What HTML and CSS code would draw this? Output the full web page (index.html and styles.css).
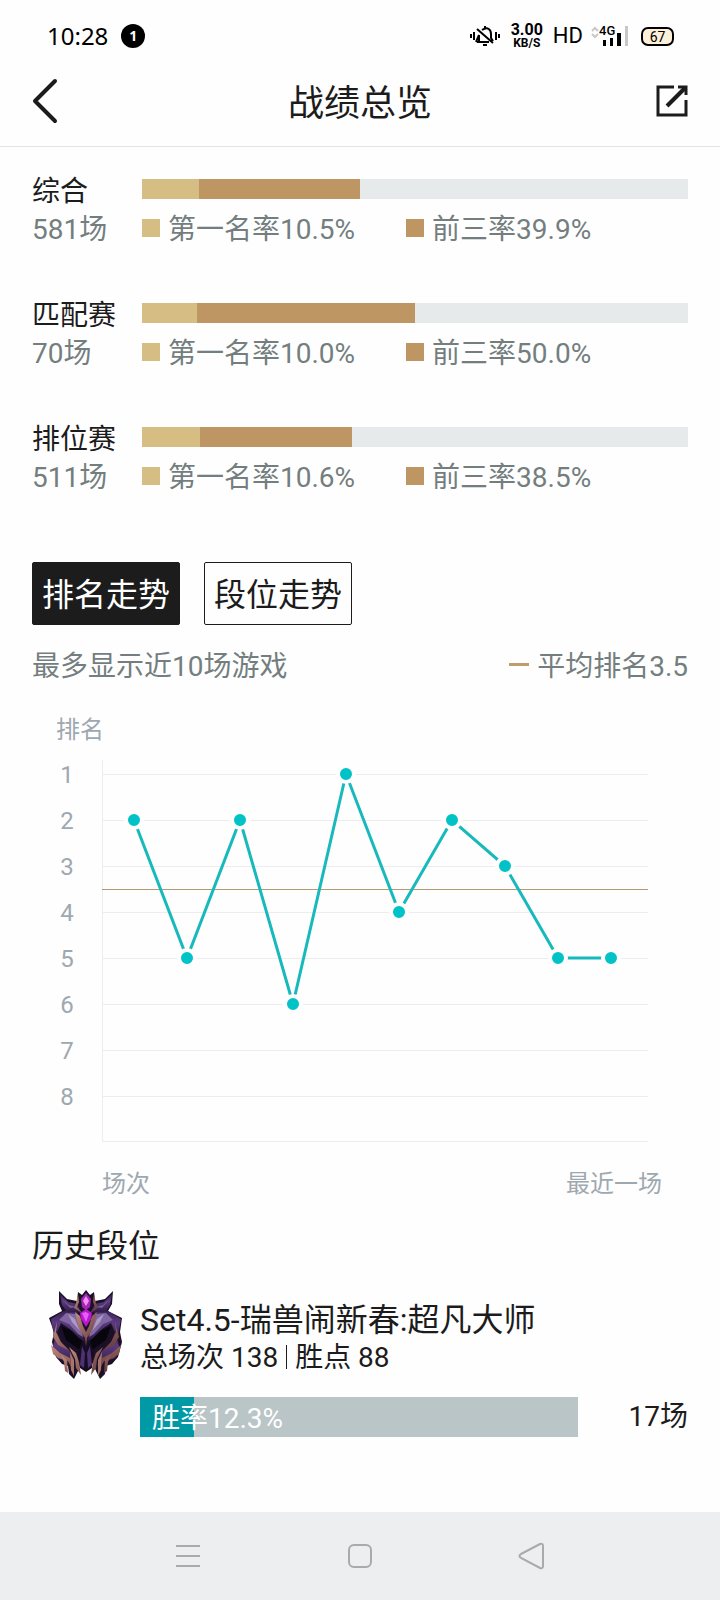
FILE: index.html
```html
<!DOCTYPE html>
<html lang="zh-CN">
<head>
    <meta charset="UTF-8">
    <meta name="viewport" content="width=device-width, initial-scale=1.0">
    <title>战绩总览</title>
    <link rel="stylesheet" href="styles.css">
</head>
<body>
    <div class="status-bar">
        <span class="time">10:28</span>
        <span class="badge">1</span>
        <div class="status-icons">
            <svg class="mute" width="32" height="22" viewBox="0 0 32 22" fill="none" stroke="#000" stroke-width="2">
                <path d="M2 9v4M5 7v8M27 7v8M30 9v4" stroke-width="2"/>
                <path d="M8 17h12M10 16V10M13 5c6-4 9 0 9 4v4l2 3M8 4l16 14M10 10l-3 7"/>
                <path d="M16 1v2M14 20h4"/>
            </svg>
            <div class="speed"><b>3.00</b><small>KB/S</small></div>
            <span class="hd">HD</span>
            <div class="signal">
                <svg width="38" height="22" viewBox="0 0 38 22">
                    <path d="M1 6l3-3 3 3M1 9l3 3 3-3" fill="none" stroke="#c8c8c8" stroke-width="2"/>
                    <path d="M12 15h3v6h-3zM19 13h3v8h-3zM26 8h4v13h-4z" fill="#000"/>
                    <path d="M34 1h3v20h-3z" fill="#c8c8c8"/>
                </svg>
                <span class="net">4G</span>
            </div>
            <span class="battery">67</span>
        </div>
    </div>

    <header class="nav">
        <button class="icon-btn" aria-label="返回">
            <svg width="26" height="46" viewBox="0 0 26 46" fill="none" stroke="#1c1c1c" stroke-width="4" stroke-linecap="round" stroke-linejoin="round">
                <path d="M23 3L3 23l20 20"/>
            </svg>
        </button>
        <h1>战绩总览</h1>
        <button class="icon-btn" aria-label="分享">
            <svg width="32" height="32" viewBox="0 0 32 32" fill="none" stroke="#1c1c1c" stroke-width="3">
                <path d="M18 2H2v28h28V15"/>
                <path d="M11 21L29 3" stroke-width="4"/>
                <path d="M22 2h8v8"/>
            </svg>
        </button>
    </header>

    <main>
        <section class="rates">
            <div class="rate">
                <div class="rate-name">综合</div>
                <div class="bar"><i class="first" style="width: 10.5%"></i><i class="top3" style="width: 29.4%"></i></div>
                <div class="rate-count">581场</div>
                <div class="legend"><span class="key first"></span><span>第一名率10.5%</span><span class="key top3"></span><span>前三率39.9%</span></div>
            </div>
            <div class="rate">
                <div class="rate-name">匹配赛</div>
                <div class="bar"><i class="first" style="width: 10%"></i><i class="top3" style="width: 40%"></i></div>
                <div class="rate-count">70场</div>
                <div class="legend"><span class="key first"></span><span>第一名率10.0%</span><span class="key top3"></span><span>前三率50.0%</span></div>
            </div>
            <div class="rate">
                <div class="rate-name">排位赛</div>
                <div class="bar"><i class="first" style="width: 10.6%"></i><i class="top3" style="width: 27.9%"></i></div>
                <div class="rate-count">511场</div>
                <div class="legend"><span class="key first"></span><span>第一名率10.6%</span><span class="key top3"></span><span>前三率38.5%</span></div>
            </div>
        </section>

        <div class="tabs">
            <button class="tab active">排名走势</button>
            <button class="tab">段位走势</button>
        </div>
        <div class="hint">
            <span>最多显示近10场游戏</span>
            <span class="average">平均排名3.5</span>
        </div>

        <svg class="chart" viewBox="0 0 656 488">
            <text x="24" y="28">排名</text>
            <g text-anchor="middle">
                <text x="35" y="73">1</text>
                <text x="35" y="119">2</text>
                <text x="35" y="165">3</text>
                <text x="35" y="211">4</text>
                <text x="35" y="257">5</text>
                <text x="35" y="303">6</text>
                <text x="35" y="349">7</text>
                <text x="35" y="395">8</text>
            </g>
            <path class="grid" d="M70 50V431M70 64H616M70 110H616M70 156H616M70 202H616M70 248H616M70 294H616M70 340H616M70 386H616M70 431H616"/>
            <path class="mean" d="M70 179H616"/>
            <polyline class="trend" points="102,110 155,248 208,110 261,294 314,64 367,202 420,110 473,156 526,248 579,248"/>
            <g class="dots">
                <circle cx="102" cy="110" r="8"/>
                <circle cx="155" cy="248" r="8"/>
                <circle cx="208" cy="110" r="8"/>
                <circle cx="261" cy="294" r="8"/>
                <circle cx="314" cy="64" r="8"/>
                <circle cx="367" cy="202" r="8"/>
                <circle cx="420" cy="110" r="8"/>
                <circle cx="473" cy="156" r="8"/>
                <circle cx="526" cy="248" r="8"/>
                <circle cx="579" cy="248" r="8"/>
            </g>
            <text x="70" y="482">场次</text>
            <text x="630" y="482" text-anchor="end">最近一场</text>
        </svg>

        <section class="history">
            <h2>历史段位</h2>
            <div class="season">
                <svg class="emblem" width="76" height="92" viewBox="0 0 76 92">
                    <defs>
                        <linearGradient id="plate" x1="0" y1="0" x2="0" y2="1">
                            <stop offset="0" stop-color="#3a2356"/>
                            <stop offset=".4" stop-color="#5b3b80"/>
                            <stop offset="1" stop-color="#2b1942"/>
                        </linearGradient>
                        <linearGradient id="copper" x1="0" y1="0" x2="1" y2="1">
                            <stop offset="0" stop-color="#c48d7c"/>
                            <stop offset="1" stop-color="#5c3438"/>
                        </linearGradient>
                    </defs>
                    <!-- helmet outline -->
                    <path d="M11 2l8 8 10 2 1-9 4 3 4-5 4 5 4-3 1 9 10-2 8-8-1 13-4 7 14 7-2 14 2 10-4 15-6 7-6 2-1 8-5 5-4-8-3-8-6 3-6-3-3 8-4 8-5-5-1-8-6-2-6-7-4-15 2-10L1 29l13-7-3-7z" fill="#1c1029"/>
                    <!-- horns and brow -->
                    <path d="M12 5l8 8 9 2 5 9-16-2-4-6zM64 5l-8 8-9 2-5 9 16-2 4-6z" fill="url(#plate)"/>
                    <path d="M14 10l7 6 8 2-7 1zM62 10l-7 6-8 2 7 1z" fill="#755c94"/>
                    <!-- face plates -->
                    <path d="M3 30l13-8 13 1 5 15 3 14-7-3-8-9-9-6-3 7-4 6zM73 30l-13-8-13 1-5 15-3 14 7-3 8-9 9-6 3 7 4 6z" fill="url(#plate)"/>
                    <path d="M18 24l10 1 5 14 2 9-5-3-9-10-10-4zM58 24l-10 1-5 14-2 9 5-3 9-10 10-4z" fill="#8067a2"/>
                    <path d="M20 25l7 5 5 12-8-9zM56 25l-7 5-5 12 8-9z" fill="#ad99c5"/>
                    <!-- eyes -->
                    <path d="M13 37l11 5 10 10 1 12-6-5-11-8zM63 37l-11 5-10 10-1 12 6-5 11-8z" fill="#08060d"/>
                    <!-- lower mask -->
                    <path d="M9 43l4 12 10 8 4 14-8-4-10-4-4-12zM67 43l-4 12-10 8-4 14 8-4 10-4 4-12z" fill="url(#plate)"/>
                    <path d="M34 52l4 6 4-6 4 12-2 15-6 4-6-4-2-15z" fill="#160d22"/>
                    <path d="M34 57l3 7-1 15-4-3zM42 57l-3 7 1 15 4-3z" fill="#4d3172"/>
                    <!-- copper trim -->
                    <path d="M27 23l5 4 3 10 3 6 3-6 3-10 5-4-4 16-6 10-1 8-1-8-6-10z" fill="url(#copper)"/>
                    <path d="M30 5l1 8-2 5 5 6-8-5 2-5zM46 5l-1 8 2 5-5 6 8-5-2-5z" fill="url(#copper)"/>
                    <path d="M9 33l-1 10 5 10 9 9-12-6-5-8zM67 33l1 10-5 10-9 9 12-6 5-8z" fill="url(#copper)"/>
                    <path d="M3 56l9 8 10 5 1 9-3-6-10-3-5-4zM73 56l-9 8-10 5-1 9 3-6 10-3 5-4z" fill="url(#copper)"/>
                    <path d="M21 58l7 6 3 9 2 13-5-7-1-9zM55 58l-7 6-3 9-2 13 5-7 1-9z" fill="url(#copper)"/>
                    <path d="M13 66l6 5 1 13-3-2-1-9zM63 66l-6 5-1 13 3-2 1-9z" fill="url(#copper)"/>
                    <path d="M22 63l4 8v16l-3-6zM54 63l-4 8v16l3-6z" fill="#a87567"/>
                    <!-- gems -->
                    <path d="M38 4l5 6-1 8-4 3-4-3-1-8z" fill="#a426b5"/>
                    <path d="M38 7l3 5-3 5-3-5z" fill="#f58cf5"/>
                    <path d="M32 24l6-4 6 4-1 6-5 8-5-8z" fill="#b818d0"/>
                    <path d="M34 24l4-1 3 2-3 8z" fill="#e95cf7"/>
                </svg>
                <div class="season-info">
                    <div class="season-name">Set4.5-瑞兽闹新春:超凡大师</div>
                    <div class="season-stats"><span>总场次 138</span><span>胜点 88</span></div>
                    <div class="win-row">
                        <div class="win-bar"><i style="width: 12.3%"></i><span>胜率12.3%</span></div>
                        <span>17场</span>
                    </div>
                </div>
            </div>
        </section>
    </main>

    <nav class="system-nav">
        <button aria-label="菜单">
            <svg width="28" height="28" viewBox="0 0 28 28"><path d="M2 4h24M2 14h24M2 24h24"/></svg>
        </button>
        <button aria-label="主页">
            <svg width="28" height="28" viewBox="0 0 28 28"><rect x="3" y="3" width="22" height="22" rx="5"/></svg>
        </button>
        <button aria-label="后退">
            <svg width="28" height="28" viewBox="0 0 28 28"><path d="M3 12L22 2q3-1 3 2v20q0 3-3 2L3 16q-3-2 0-4z"/></svg>
        </button>
    </nav>
</body>
</html>
```

FILE: styles.css
```css
* {
    box-sizing: border-box;
}
body {
    margin: 0;
    min-height: 100vh;
    display: flex;
    flex-direction: column;
    background: #fefefe;
    color: #1c1c1c;
    font-family: Roboto, "Noto Sans CJK SC", sans-serif;
    font-size: 28px;
    line-height: 38px;
}
button {
    border: none;
    padding: 0;
    background: none;
    font: inherit;
    color: inherit;
}
svg {
    display: block;
}

/* phone status bar */
.status-bar {
    height: 72px;
    padding: 0 46px 0 47px;
    display: flex;
    align-items: center;
    color: #000;
}
.time {
    font-family: "Noto Sans", sans-serif;
    font-size: 24px;
}
.badge {
    width: 24px;
    height: 24px;
    margin-left: 13px;
    border-radius: 50%;
    background: #000;
    color: #fff;
    font: bold 14px/24px "Noto Sans", sans-serif;
    text-align: center;
}
.status-icons {
    margin-left: auto;
    display: flex;
    align-items: center;
}
.speed {
    margin: 0 10px;
    text-align: center;
}
.speed b, .speed small {
    display: block;
    font-size: 16px;
    line-height: 14px;
    font-weight: 700;
}
.speed small {
    font-size: 12px;
    line-height: 12px;
}
.hd {
    font-size: 22px;
}
.signal {
    position: relative;
    margin: 0 12px 0 8px;
}
.net {
    position: absolute;
    left: 8px;
    top: 0;
    font-size: 13px;
    line-height: 12px;
    font-weight: 500;
}
.battery {
    width: 33px;
    height: 19px;
    border: 2px solid #000;
    border-radius: 7px;
    background: #fdf0d8;
    font-size: 14px;
    line-height: 16px;
    text-align: center;
}

.nav {
    height: 75px;
    padding: 0 32px 16px;
    display: flex;
    align-items: center;
    justify-content: space-between;
    border-bottom: 1px solid #e2e4e4;
}
.icon-btn {
    width: 32px;
}
h1 {
    margin: 0;
    padding-top: 6px;
    font-size: 36px;
    font-weight: 400;
}

main {
    flex: 1;
    padding: 26px 32px;
}
.rate {
    display: grid;
    grid-template-columns: 110px 1fr;
    align-items: center;
    margin-bottom: 48px;
}
.bar {
    height: 20px;
    margin-bottom: 6px;
    display: flex;
    background: #e6eaea;
}
.first {
    background: #d6bd84;
}
.top3 {
    background: #be9664;
}
.rate-count, .legend {
    color: #747e7e;
}
.legend {
    display: flex;
    align-items: center;
}
.key {
    width: 18px;
    height: 18px;
    margin-right: 8px;
    margin-bottom: 5px;
}
.key.top3 {
    margin-left: 51px;
}

.tabs {
    display: flex;
    gap: 24px;
    margin-top: 65px;
}
.tab {
    padding: 4px 9px 0;
    border: 1px solid #1c1c1c;
    border-radius: 2px;
    font-size: 32px;
    line-height: 57px;
}
.tab.active {
    background: #1c1c1c;
    color: #fff;
}
.hint {
    margin-top: 23px;
    display: flex;
    justify-content: space-between;
    color: #747e7e;
}
.average::before {
    content: "";
    display: inline-block;
    width: 20px;
    height: 3px;
    margin-right: 8px;
    vertical-align: 10px;
    background: #be9e6c;
}

.chart {
    width: 100%;
    margin-top: 24px;
}
.chart text {
    font-size: 24px;
    fill: #9ea8b0;
}
.grid, .mean {
    stroke: #ededed;
    shape-rendering: crispEdges;
}
.mean {
    stroke: #b59a70;
}
.trend {
    fill: none;
    stroke: #18b9bc;
    stroke-width: 3;
}
.dots {
    fill: #00c2c7;
    stroke: #fefefe;
    stroke-width: 4;
}

h2 {
    margin: 29px 0 0;
    font-size: 32px;
    font-weight: 400;
}
.season {
    margin-top: 24px;
    display: flex;
}
.emblem {
    margin: 0 16px;
}
.season-info {
    flex: 1;
    padding-top: 12px;
}
.season-name {
    font-size: 32px;
}
.season-stats {
    display: flex;
    align-items: center;
}
.season-stats span + span::before {
    content: "";
    display: inline-block;
    width: 1px;
    height: 24px;
    margin: 0 8px;
    background: #1c1c1c;
    vertical-align: -2px;
}
.win-row {
    margin-top: 18px;
    display: flex;
    align-items: center;
    justify-content: space-between;
    line-height: 44px;
}
.win-bar {
    position: relative;
    width: 80%;
    height: 40px;
    padding-left: 12px;
    background: #bac5c7;
    color: #fff;
}
.win-bar i {
    position: absolute;
    left: 0;
    top: 0;
    height: 100%;
    background: #0099a5;
}
.win-bar span {
    position: relative;
}

.system-nav {
    height: 88px;
    padding: 0 102px;
    display: flex;
    align-items: center;
    justify-content: space-around;
    background: #edeef0;
}
.system-nav svg {
    fill: none;
    stroke: #a8aaab;
    stroke-width: 2;
}
```
